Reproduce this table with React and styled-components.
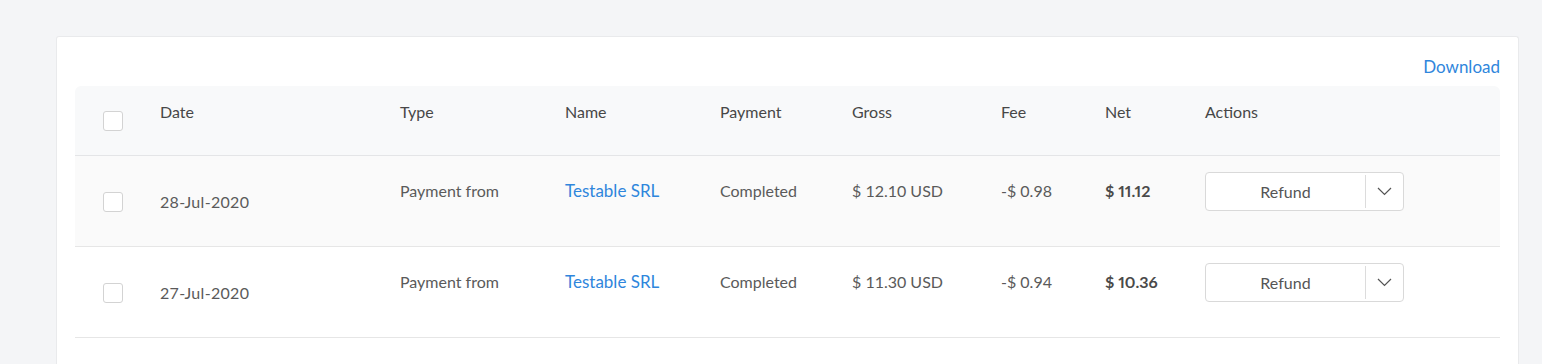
import React from "react";
import styled, { createGlobalStyle } from "styled-components";

const Global = createGlobalStyle`
  html, body { margin: 0; padding: 0; background: #f4f5f7; }
  body { font-family: Lato, "Open Sans", "Liberation Sans", sans-serif; }
  * { box-sizing: border-box; }
`;

const Page = styled.div`
  padding: 36px 23px 0 56px;
  min-height: 364px;
`;

const Card = styled.div`
  background: #fff;
  border: 1px solid #e9eaec;
  border-bottom: none;
  border-radius: 3px 3px 0 0;
  padding: 0 18px 40px 18px;
`;

const TopBar = styled.div`
  display: flex;
  justify-content: flex-end;
  height: 49px;
  padding-top: 19px;
`;

const Link = styled.a`
  color: #2f86dc;
  font-size: 17px;
  line-height: 22px;
  text-decoration: none;
  cursor: pointer;
`;

const COLS = "85px 240px 165px 155px 132px 149px 104px 100px 1fr";

const HeaderRow = styled.div`
  display: grid;
  grid-template-columns: ${COLS};
  height: 70px;
  background: #f8f9fa;
  border-radius: 6px 6px 0 0;
  border-bottom: 1px solid #e4e5e7;
`;

const Row = styled.div`
  display: grid;
  grid-template-columns: ${COLS};
  height: 91px;
  background: ${(p) => (p.$shaded ? "#fafafa" : "#ffffff")};
  border-bottom: 1px solid #e6e6e6;
`;

const HeadCell = styled.div`
  padding-top: 15px;
  font-size: 16px;
  line-height: 22px;
  color: #474747;
`;

const Cell = styled.div`
  padding-top: ${(p) => (p.$middle ? "0" : "24px")};
  align-self: ${(p) => (p.$middle ? "center" : "start")};
  margin-top: ${(p) => (p.$middle ? "2px" : "0")};
  font-size: ${(p) => (p.$link ? "17px" : "16px")};
  line-height: 22px;
  color: ${(p) => (p.$link ? "#2f86dc" : p.$bold ? "#4a4a4a" : "#5a5a5a")};
  font-weight: ${(p) => (p.$bold ? 700 : 400)};
  font-variant-numeric: ${(p) => (p.$bold ? "proportional-nums" : "normal")};
  letter-spacing: ${(p) => (p.$middle ? "0.3px" : "0")};
`;

const CheckCell = styled.div`
  display: flex;
  align-items: center;
  padding-left: 28px;
  padding-top: ${(p) => (p.$offset ? "2px" : "0")};
`;

const Checkbox = styled.span`
  display: block;
  width: 20px;
  height: 20px;
  border: 1px solid #d3d3d3;
  border-radius: 3px;
  background: #fff;
`;

const ActionCell = styled.div`
  padding-top: 16px;
`;

const SplitButton = styled.div`
  display: flex;
  width: 199px;
  height: 39px;
  border: 1px solid #d9d9d9;
  border-radius: 4px;
  background: #fff;
  overflow: hidden;
`;

const MainPart = styled.button`
  flex: 1;
  border: none;
  background: transparent;
  font-family: inherit;
  font-size: 16px;
  color: #555;
  padding: 0;
  cursor: pointer;
`;

const Divider = styled.span`
  width: 1px;
  margin: 2px 0;
  background: #dcdcdc;
`;

const Caret = styled.button`
  width: 37px;
  border: none;
  background: transparent;
  display: flex;
  align-items: center;
  justify-content: center;
  padding: 0;
  cursor: pointer;
`;

const rows = [
  { date: "28-Jul-2020", gross: "$ 12.10 USD", fee: "-$ 0.98", net: "$ 11.12" },
  { date: "27-Jul-2020", gross: "$ 11.30 USD", fee: "-$ 0.94", net: "$ 10.36" },
];

const Chevron = () => (
  <svg width="15" height="9" viewBox="0 0 15 9" fill="none">
    <path d="M1 1l6.5 6.5L14 1" stroke="#555" strokeWidth="1.2" />
  </svg>
);

export default function App() {
  return (
    <>
      <Global />
      <Page>
        <Card>
          <TopBar>
            <Link>Download</Link>
          </TopBar>
          <HeaderRow>
            <CheckCell>
              <Checkbox />
            </CheckCell>
            <HeadCell>Date</HeadCell>
            <HeadCell>Type</HeadCell>
            <HeadCell>Name</HeadCell>
            <HeadCell>Payment</HeadCell>
            <HeadCell>Gross</HeadCell>
            <HeadCell>Fee</HeadCell>
            <HeadCell>Net</HeadCell>
            <HeadCell>Actions</HeadCell>
          </HeaderRow>
          {rows.map((r, i) => (
            <Row key={r.date} $shaded={i === 0}>
              <CheckCell $offset>
                <Checkbox />
              </CheckCell>
              <Cell $middle>{r.date}</Cell>
              <Cell>Payment from</Cell>
              <Cell $link>Testable SRL</Cell>
              <Cell>Completed</Cell>
              <Cell>{r.gross}</Cell>
              <Cell>{r.fee}</Cell>
              <Cell $bold>{r.net}</Cell>
              <ActionCell>
                <SplitButton>
                  <MainPart>Refund</MainPart>
                  <Divider />
                  <Caret>
                    <Chevron />
                  </Caret>
                </SplitButton>
              </ActionCell>
            </Row>
          ))}
        </Card>
      </Page>
    </>
  );
}
